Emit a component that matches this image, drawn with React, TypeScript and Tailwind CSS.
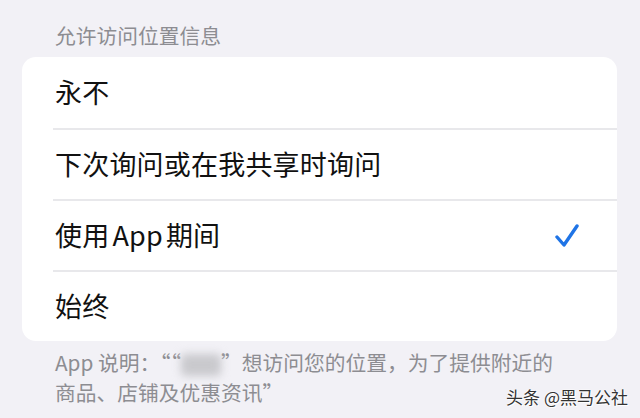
import React from "react";

const font = { fontFamily: '"Noto Sans CJK SC", "Noto Sans", sans-serif' };

function Check() {
  return (
    <svg width="24" height="26" viewBox="0 0 24 26" fill="none">
      <path d="M2 14 L9 22 L22 3" stroke="#1f74e6" strokeWidth="3.4" strokeLinecap="round" strokeLinejoin="round" />
    </svg>
  );
}

export default function App() {
  const rows: React.ReactNode[] = [
    "永不",
    "下次询问或在我共享时询问",
    <>
      使用<span className="mx-[3px]">App</span>期间
    </>,
    "始终",
  ];
  return (
    <div className="relative w-[640px] h-[418px] overflow-hidden bg-[#f2f1f6]" style={font}>
      <div className="pt-[21px] pl-[55px] text-[20.75px] leading-[28px] text-[#8d8d92]">允许访问位置信息</div>
      <div className="mt-[8px] ml-[22px] mr-[23px] bg-white rounded-[14px] overflow-hidden">
        {rows.map((r, i) => (
          <div key={i} className="pl-[31px]">
            <div
              className={
                "h-[71px] flex items-center justify-between pr-[38px] text-[27px] text-[#111] " +
                (i > 0 ? "border-t-2 border-[#e8e8eb]" : "")
              }
            >
              <span className="pl-[2px] tracking-[0.2px]">{r}</span>
              {i === 2 && <Check />}
            </div>
          </div>
        ))}
      </div>
      <div className="mt-[6px] pl-[55px] pr-[30px] text-[20.75px] leading-[30px] text-[#8d8d92]">
        <div className="whitespace-nowrap">
          App 说明：““
          <span className="inline-block w-[40px] h-[22px] align-middle bg-[#c9c9cd] blur-[4px] rounded" />
          ”想访问您的位置，为了提供附近的
        </div>
        <div>商品、店铺及优惠资讯”</div>
      </div>
      <div
        className="absolute right-[12px] bottom-[10px] text-[17px] leading-[22px] text-[#333]"
        style={{ textShadow: "0 0 2px #fff, 0 0 2px #fff, 1px 1px 0 #fff" }}
      >
        头条 @黑马公社
      </div>
    </div>
  );
}
